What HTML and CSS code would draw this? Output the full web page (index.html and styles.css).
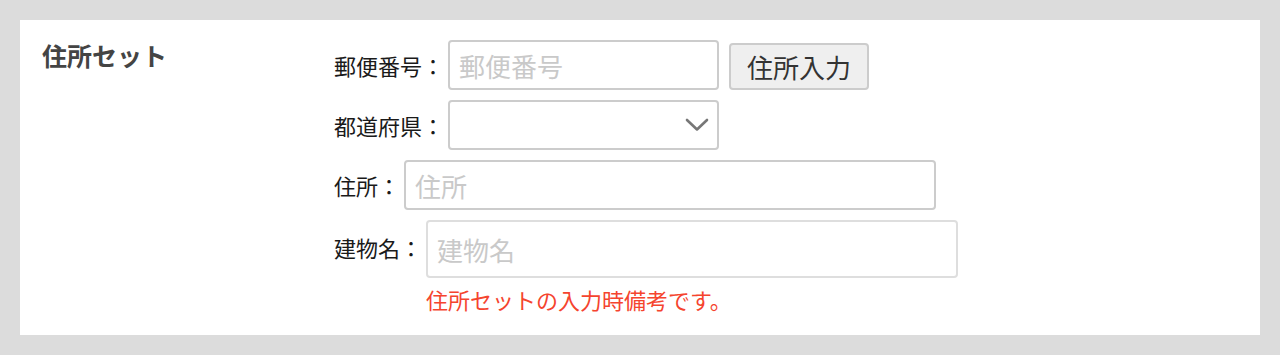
FILE: index.html
```html
<!DOCTYPE html>
<html lang="ja">
<head>
  <meta charset="UTF-8">
  <title>住所セット</title>
  <link rel="stylesheet" href="styles.css">
</head>
<body>
  <div class="panel">
    <div class="title">住所セット</div>

    <div class="fields">
      <div class="row row-zip">
        <label for="zip">郵便番号：</label>
        <input type="text" id="zip" class="field field-zip" placeholder="郵便番号">
        <button type="button" class="btn">住所入力</button>
      </div>

      <div class="row">
        <label for="pref">都道府県：</label>
        <div class="select-wrap">
          <select id="pref" class="field field-select">
            <option value=""></option>
          </select>
          <svg class="chevron" width="24" height="14" viewBox="0 0 24 14">
            <path d="M2 2 L12 11.5 L22 2" fill="none" stroke="#777" stroke-width="2.6" stroke-linecap="round" stroke-linejoin="round"/>
          </svg>
        </div>
      </div>

      <div class="row">
        <label for="addr">住所：</label>
        <input type="text" id="addr" class="field field-wide" placeholder="住所">
      </div>

      <div class="row row-building">
        <label for="building">建物名：</label>
        <div class="col">
          <input type="text" id="building" class="field field-wide field-tall" placeholder="建物名">
          <p class="note">住所セットの入力時備考です。</p>
        </div>
      </div>
    </div>
  </div>
</body>
</html>
```

FILE: styles.css
```css
body {
  margin: 0;
  padding: 20px;
  background: #dcdcdc;
  font-family: "Noto Sans CJK JP", "Noto Sans", sans-serif;
  color: #222;
}

.panel {
  background: #fff;
  display: grid;
  grid-template-columns: 292px 1fr;
  padding: 20px 22px 20px 22px;
  height: 315px;
  box-sizing: border-box;
}

.title {
  font-size: 25px;
  font-weight: bold;
  color: #444;
  line-height: 30px;
  padding-top: 0;
}

.fields {
  display: flex;
  flex-direction: column;
  gap: 10px;
}

.row {
  display: flex;
  align-items: center;
}

.row-zip {
  align-items: flex-end;
}

.row-zip label {
  align-self: center;
}

.row-building {
  align-items: flex-start;
}

.row-building label {
  line-height: 54px;
}

label {
  font-size: 22px;
  line-height: 30px;
  margin-right: 4px;
  white-space: nowrap;
  color: #1a1a1a;
}

.field {
  box-sizing: border-box;
  height: 50px;
  border: 2px solid #ccc;
  border-radius: 4px;
  padding: 0 9px;
  font-family: inherit;
  font-size: 26px;
  color: #333;
  background: #fff;
  outline: none;
}

.field::placeholder {
  color: #c9c9c9;
}

.field-zip {
  width: 271px;
}

.field-wide {
  width: 532px;
}

.field-tall {
  height: 58px;
  border-color: #dedede;
}

.btn {
  margin-left: 10px;
  box-sizing: border-box;
  width: 140px;
  height: 47px;
  background: #efefef;
  border: 2px solid #ccc;
  border-radius: 4px;
  font-family: inherit;
  font-size: 26px;
  color: #333;
  cursor: pointer;
  padding: 0;
}

.select-wrap {
  position: relative;
}

.field-select {
  display: block;
  width: 271px;
  -webkit-appearance: none;
  appearance: none;
}

.chevron {
  position: absolute;
  right: 10px;
  top: 18px;
  pointer-events: none;
}

.col {
  display: flex;
  flex-direction: column;
}

.note {
  margin: 6px 0 0;
  font-size: 22px;
  line-height: 30px;
  color: #f5442e;
}
```
